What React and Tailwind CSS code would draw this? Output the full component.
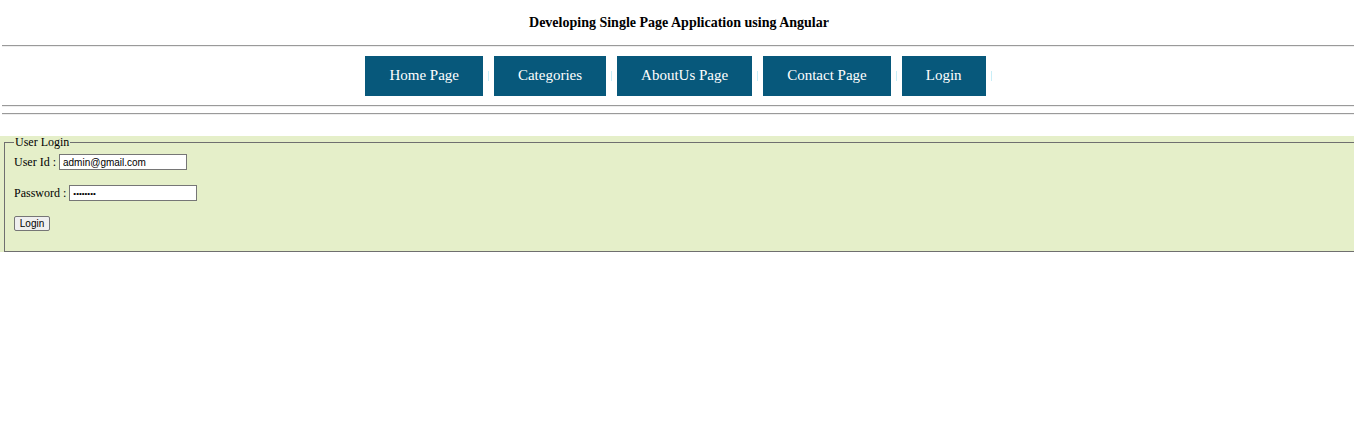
import React from "react";

const NAV = ["Home Page", "Categories", "AboutUs Page", "Contact Page", "Login"];

function Rule({ className = "" }) {
  return <div className={`ml-[2px] h-0 border-t border-b border-t-[#9a9a9a] border-b-[#eeeeee] ${className}`} />;
}

export default function App() {
  return (
    <div className="h-[428px] w-full overflow-hidden bg-white font-['Liberation_Serif',serif] text-black">
      <div className="pl-1 pt-[15px] text-center text-[14px] font-bold leading-[16px]">
        Developing Single Page Application using Angular
      </div>
      <Rule className="mt-[14px]" />

      <nav className="mt-[9px] flex items-center justify-center pl-[8px]">
        {NAV.map((label) => (
          <div key={label} className="flex items-center">
            <a href="#" className="flex h-[40px] items-center bg-[#07587b] px-6 pb-[1px] text-[15px] text-white">
              {label}
            </a>
            <span className="mx-[5px] h-[10px] w-[1px] bg-[#c9eef7]" />
          </div>
        ))}
      </nav>

      <Rule className="mt-[9px]" />
      <Rule className="mt-[6px]" />

      <div className="mt-[21px] bg-[#e5efc9] pl-[4px]">
        <fieldset className="w-[calc(100%+20px)] border border-[#6f6f6f] pl-[9px] pb-[20px] text-[12px]">
          <legend className="px-[1px] leading-[12px]">User Login</legend>
          <div className="mt-[6px] flex h-[16px] items-center">
            <label className="leading-[14px]">User Id :</label>
            <input
              readOnly
              defaultValue="admin@gmail.com"
              className="ml-[3px] h-[16px] w-[128px] border border-[#767676] bg-white px-[3px] font-['Liberation_Sans',Arial,sans-serif] text-[10px] outline-none"
            />
          </div>
          <div className="mt-[15px] flex h-[16px] items-center">
            <label className="leading-[14px]">Password :</label>
            <input
              type="password"
              readOnly
              defaultValue="12345678"
              className="ml-[3px] h-[16px] w-[128px] border border-[#767676] bg-white px-[3px] font-['Liberation_Sans',Arial,sans-serif] text-[8px] outline-none"
            />
          </div>
          <div className="mt-[15px] flex">
            <button className="flex h-[15px] w-[36px] items-center justify-center rounded-[2px] border border-[#767676] bg-[#efefef] font-['Liberation_Sans',Arial,sans-serif] text-[10px] leading-none">
              Login
            </button>
          </div>
        </fieldset>
      </div>
    </div>
  );
}
